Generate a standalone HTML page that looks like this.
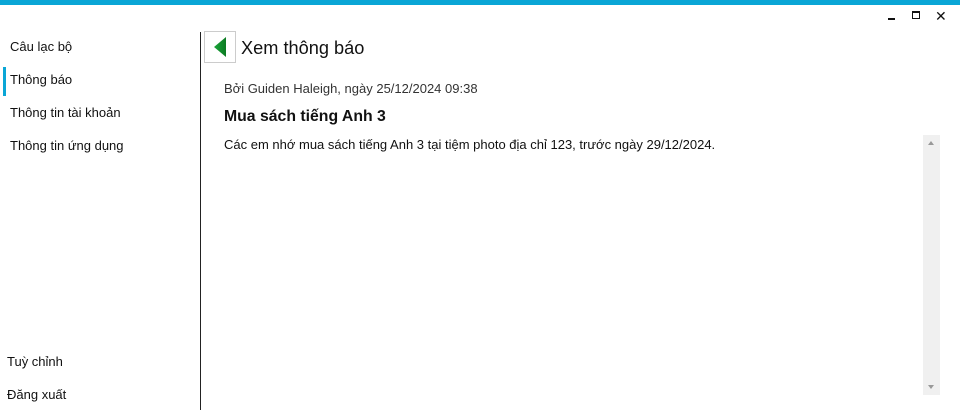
<!DOCTYPE html>
<html><head><meta charset="utf-8"><style>
body{margin:0;width:960px;height:414px;background:#fff;font-family:"Liberation Sans",sans-serif;color:#111;position:relative;overflow:hidden}
.top{position:absolute;left:0;top:0;width:960px;height:5px;background:#0aa6d6}
.t{position:absolute;white-space:nowrap;font-size:13px;line-height:16px}
.sel{position:absolute;left:3px;top:67px;width:3px;height:29px;background:#0aa6d6}
.div{position:absolute;left:200px;top:32px;width:1px;height:378px;background:#222}
.back{position:absolute;left:204px;top:31px;width:30px;height:30px;border:1px solid #ccc}
.sb{position:absolute;left:923px;top:135px;width:17px;height:260px;background:#f0f0f0}
</style></head><body>
<div class="top"></div>
<div style="position:absolute;left:888px;top:18px;width:7px;height:2px;background:#111"></div>
<div style="position:absolute;left:912px;top:11px;width:8px;height:8px;border:1.5px solid #111;border-top-width:2.5px;box-sizing:border-box"></div>
<div class="t" style="left:935px;top:8px;font-size:14px">✕</div>
<div class="sel"></div>
<div class="t" style="left:10px;top:39px">Câu lạc bộ</div>
<div class="t" style="left:10px;top:72px">Thông báo</div>
<div class="t" style="left:10px;top:105px">Thông tin tài khoản</div>
<div class="t" style="left:10px;top:138px">Thông tin ứng dụng</div>
<div class="t" style="left:7px;top:354px">Tuỳ chỉnh</div>
<div class="t" style="left:7px;top:387px">Đăng xuất</div>
<div class="div"></div>
<div class="back"><svg width="30" height="30"><defs><linearGradient id="g" x1="0" x2="1"><stop offset="0" stop-color="#1aa53a"/><stop offset="1" stop-color="#0c7a22"/></linearGradient></defs><polygon points="9,15 21,5 21,25" fill="url(#g)"/></svg></div>
<div class="t" style="left:241px;top:37px;font-size:18.2px;line-height:22px">Xem thông báo</div>
<div class="t" style="left:224px;top:81px;color:#333">Bởi Guiden Haleigh, ngày 25/12/2024 09:38</div>
<div class="t" style="left:224px;top:108px;font-size:15.8px;font-weight:bold;line-height:18px">Mua sách tiếng Anh 3</div>
<div class="t" style="left:224px;top:137px;font-size:13px">Các em nhớ mua sách tiếng Anh 3 tại tiệm photo địa chỉ 123, trước ngày 29/12/2024.</div>
<div class="sb"><div style="position:absolute;left:5px;top:6px;border:3.5px solid transparent;border-bottom:4px solid #999;border-top:0"></div><div style="position:absolute;left:5px;bottom:6px;border:3.5px solid transparent;border-top:4px solid #999;border-bottom:0"></div></div>
</body></html>
